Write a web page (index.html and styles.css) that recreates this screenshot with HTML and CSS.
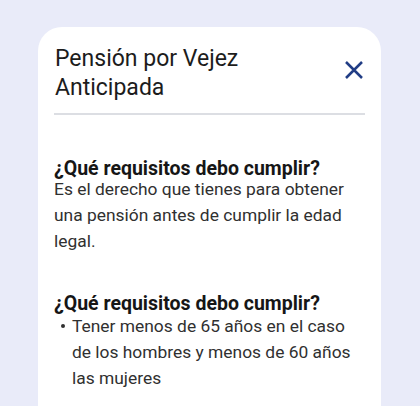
FILE: index.html
```html
<!DOCTYPE html>
<html lang="es">
<head>
<meta charset="utf-8">
<link rel="stylesheet" href="styles.css">
</head>
<body>
<div class="card">
  <div class="header">
    <h1 class="title">Pensión por Vejez Anticipada</h1>
    <button class="close" aria-label="Cerrar">
      <svg width="18" height="18" viewBox="0 0 18 18"><path d="M1 1 L17 17 M17 1 L1 17" stroke="#213d85" stroke-width="2.5" fill="none"/></svg>
    </button>
  </div>
  <div class="divider"></div>
  <section class="block">
    <h2 class="q">¿Qué requisitos debo cumplir?</h2>
    <p class="text">Es el derecho que tienes para obtener una pensión antes de cumplir la edad legal.</p>
  </section>
  <section class="block">
    <h2 class="q">¿Qué requisitos debo cumplir?</h2>
    <ul class="list">
      <li>Tener menos de 65 años en el caso de los hombres y menos de 60 años las mujeres</li>
    </ul>
  </section>
</div>
</body>
</html>
```
FILE: styles.css
```css
html, body {
  margin: 0;
  padding: 0;
  background: #e9ebf9;
  height: 406px;
  overflow: hidden;
}
body {
  font-family: Roboto, "Liberation Sans", sans-serif;
  color: #1c1c1c;
}
.card {
  margin: 27px 0 0 38px;
  width: 343px;
  height: 420px;
  background: #fff;
  border-radius: 24px;
  box-sizing: border-box;
  padding: 17px 16px 0 16px;
}
.header {
  display: flex;
  align-items: center;
  justify-content: space-between;
}
.title {
  margin: 0 0 0 1px;
  font-size: 23px;
  font-weight: 400;
  line-height: 29px;
  width: 240px;
}
.close {
  border: 0;
  background: none;
  padding: 0;
  margin: 0 2px 6px 0;
  width: 18px;
  height: 18px;
  display: flex;
}
.divider {
  height: 2px;
  background: #dcdee3;
  margin-top: 11px;
}
.block {
  margin-top: 44px;
}
.block + .block {
  margin-top: 40px;
}
.q {
  margin: 0;
  font-size: 19.5px;
  font-weight: 700;
  line-height: 20px;
  color: #161616;
}
.text {
  margin: -3px 0 0;
  font-size: 17.4px;
  line-height: 26px;
  color: #303030;
}
.list {
  list-style: none;
  margin: -1.5px 0 0;
  padding: 0 0 0 18px;
  font-size: 17.4px;
  line-height: 26px;
  color: #303030;
}
.list li {
  position: relative;
}
.list li::before {
  content: "";
  position: absolute;
  left: -11px;
  top: 11px;
  width: 4px;
  height: 4px;
  border-radius: 50%;
  background: #303030;
}
```
